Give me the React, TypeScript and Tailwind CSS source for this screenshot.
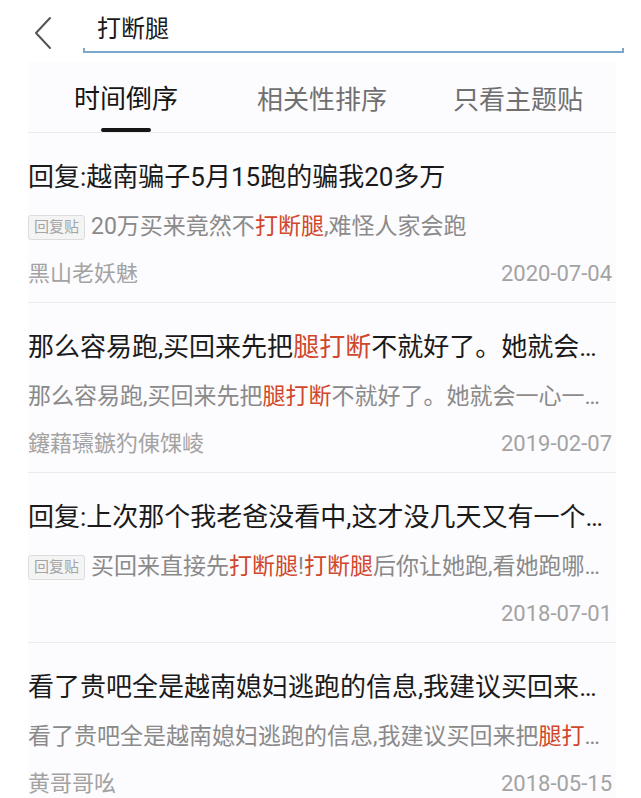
import React from "react";

const FONT = { fontFamily: 'Roboto, "Noto Sans CJK SC", "Noto Sans", sans-serif' };

type Seg = { t: string; h?: boolean };

const items: {
  title: Seg[];
  badge?: boolean;
  sub: Seg[];
  author?: string;
  date: string;
}[] = [
  {
    title: [{ t: "回复:越南骗子5月15跑的骗我20多万" }],
    badge: true,
    sub: [{ t: "20万买来竟然不" }, { t: "打断腿", h: true }, { t: ",难怪人家会跑" }],
    author: "黑山老妖魅",
    date: "2020-07-04",
  },
  {
    title: [
      { t: "那么容易跑,买回来先把" },
      { t: "腿打断", h: true },
      { t: "不就好了。她就会一心一意跟你过日子" },
    ],
    sub: [
      { t: "那么容易跑,买回来先把" },
      { t: "腿打断", h: true },
      { t: "不就好了。她就会一心一意跟你过日子了" },
    ],
    author: "鑳藉瓙鏃犳倲馃崚",
    date: "2019-02-07",
  },
  {
    title: [{ t: "回复:上次那个我老爸没看中,这才没几天又有一个越南的跑了" }],
    badge: true,
    sub: [
      { t: "买回来直接先" },
      { t: "打断腿", h: true },
      { t: "!" },
      { t: "打断腿", h: true },
      { t: "后你让她跑,看她跑哪里去" },
    ],
    date: "2018-07-01",
  },
  {
    title: [{ t: "看了贵吧全是越南媳妇逃跑的信息,我建议买回来把腿打断" }],
    sub: [
      { t: "看了贵吧全是越南媳妇逃跑的信息,我建议买回来把" },
      { t: "腿打断", h: true },
      { t: ",看她还怎么跑" },
    ],
    author: "黄哥哥吆",
    date: "2018-05-15",
  },
];

function Segs({ segs }: { segs: Seg[] }) {
  return (
    <>
      {segs.map((s, i) =>
        s.h ? (
          <span key={i} className="text-[#d0472c]">
            {s.t}
          </span>
        ) : (
          <span key={i}>{s.t}</span>
        )
      )}
    </>
  );
}

export default function App() {
  return (
    <div className="w-[641px] h-[798px] bg-white overflow-hidden" style={FONT}>
      {/* Search header */}
      <div className="flex items-start h-[62px]">
        <div className="w-[83px] h-[62px] flex items-start pl-[33px] pt-[16px]">
          <svg width="20" height="34" viewBox="0 0 20 34" fill="none">
            <polyline
              points="17,2 3,17 17,32"
              stroke="#555"
              strokeWidth="2"
              strokeLinecap="round"
              strokeLinejoin="round"
            />
          </svg>
        </div>
        <div className="w-[541px] flex flex-col">
          <div className="h-[48px] flex items-center pl-[14px] pt-[10px] text-[24px] text-[#1a1a1a] leading-none">
            打断腿
          </div>
          <div className="h-[5px] border-x-2 border-b-2 border-[#7ca7cd]" />
        </div>
      </div>

      {/* Panel */}
      <div className="mx-[28px] w-[588px] bg-[#fcfbfd] h-[736px]">
        {/* Tabs */}
        <div className="flex h-[71px] border-b border-[#ececee]">
          <div className="flex-1 flex flex-col items-center">
            <div className="h-[67px] flex items-center pt-[8px] text-[26px] text-[#151515] leading-none">
              时间倒序
            </div>
            <div className="w-[50px] h-[4px] rounded-full bg-[#151515]" />
          </div>
          <div className="flex-1 flex flex-col items-center">
            <div className="h-[67px] flex items-center pt-[8px] text-[26px] text-[#707070] leading-none">
              相关性排序
            </div>
          </div>
          <div className="flex-1 flex flex-col items-center">
            <div className="h-[67px] flex items-center pt-[8px] text-[26px] text-[#707070] leading-none">
              只看主题贴
            </div>
          </div>
        </div>

        {/* List */}
        {items.map((it, idx) => (
          <div
            key={idx}
            className="h-[170px] border-b border-[#ececee] pt-[27px] pr-[4px] flex flex-col"
          >
            <div className="h-[34px] leading-[34px] text-[26px] text-[#1a1a1a] truncate">
              <Segs segs={it.title} />
            </div>
            <div className="mt-[17px] h-[32px] flex items-center">
              {it.badge && (
                <span className="shrink-0 mr-[6px] h-[25px] px-[5px] flex items-center border border-[#dcdcdc] bg-[#f4f4f4] rounded-[3px] text-[15px] text-[#a4a4a4] leading-none">
                  回复贴
                </span>
              )}
              <div className="truncate text-[23px] leading-[32px] text-[#8a8a8a]">
                <Segs segs={it.sub} />
              </div>
            </div>
            <div className="mt-[16px] h-[30px] flex items-center justify-between text-[22px] text-[#a3a3a3] leading-none">
              <span>{it.author ?? ""}</span>
              <span>{it.date}</span>
            </div>
          </div>
        ))}
      </div>
    </div>
  );
}
